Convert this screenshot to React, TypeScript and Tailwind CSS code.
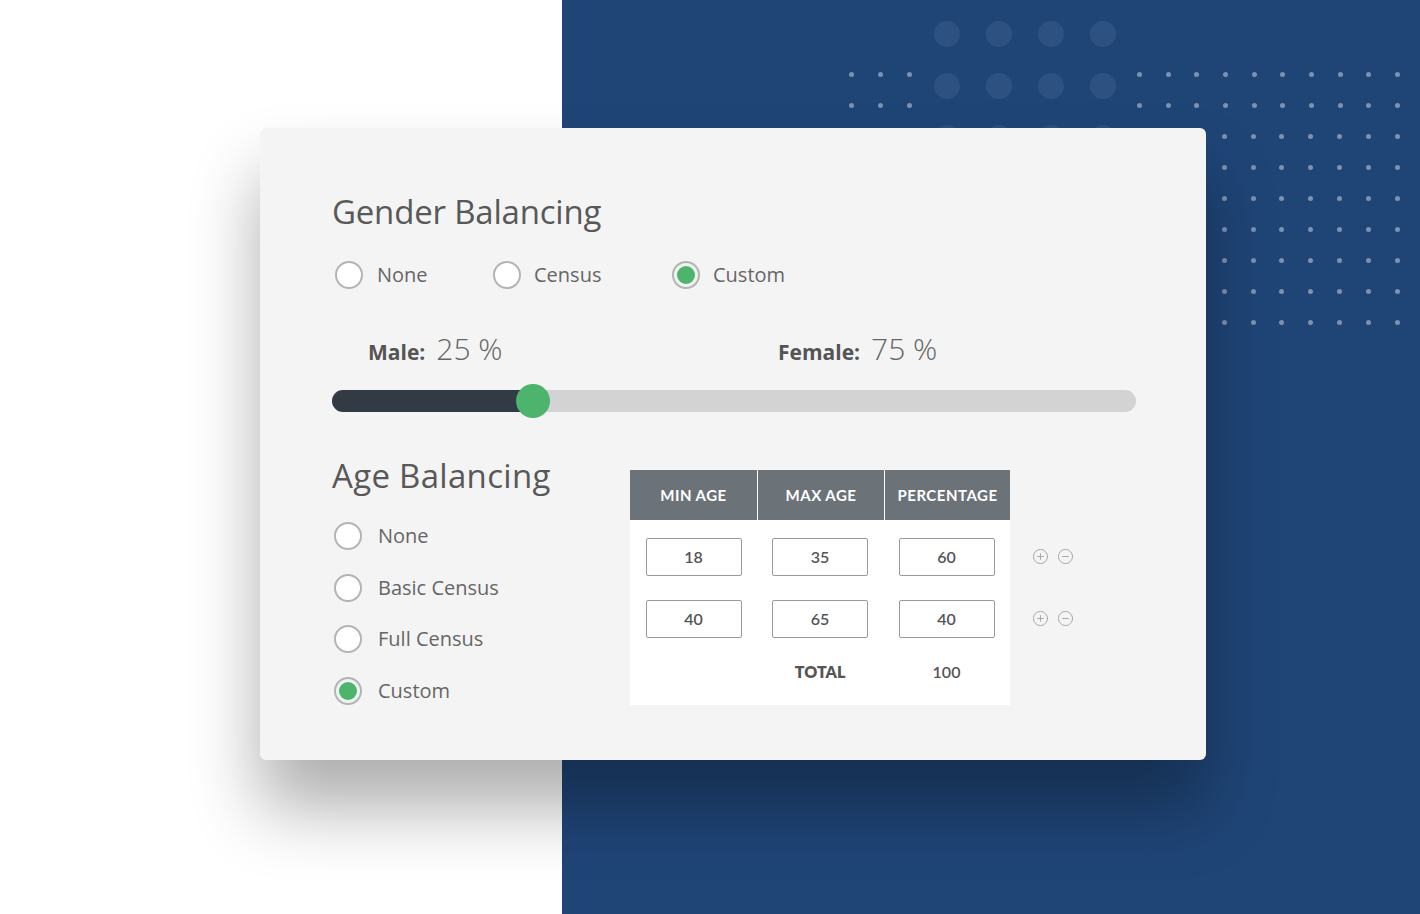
import React from "react";
import { CirclePlus, CircleMinus } from "lucide-react";

const Radio = ({ checked }: { checked?: boolean }) =>
  checked ? (
    <span className="flex h-[28px] w-[28px] shrink-0 items-center justify-center rounded-full border-2 border-[#b4b4b4] bg-[#eef5f0]">
      <span className="h-[18px] w-[18px] rounded-full bg-[#4cb46c]" />
    </span>
  ) : (
    <span className="h-[28px] w-[28px] shrink-0 rounded-full border-2 border-[#b4b4b4] bg-white" />
  );

const Dot = () => <span className="h-[5px] w-[5px] rounded-full bg-[#7d91b0]" />;

const NumBox = ({ v }: { v: string }) => (
  <div className="mx-auto flex h-[38px] w-[96px] items-center justify-center rounded-[2px] border border-[#9a9a9a] bg-white text-[16px] font-semibold text-[#555]">
    {v}
  </div>
);

export default function App() {
  const topRightCols = Array.from({ length: 10 });
  const lowerCols = Array.from({ length: 7 });
  const lowerRows = Array.from({ length: 7 });
  return (
    <div
      className="relative flex h-[914px] w-[1420px] overflow-hidden bg-white"
      style={{ fontFamily: '"Open Sans", "Noto Sans", sans-serif' }}
    >
      <div className="w-[562px] shrink-0 bg-white" />
      <div className="relative flex-1 bg-[#1f4577]">
        {/* big circles */}
        <div className="absolute left-[372px] top-[21px] grid grid-cols-4 gap-x-[26px] gap-y-[26px]">
          {Array.from({ length: 12 }).map((_, i) => (
            <span key={i} className="h-[26px] w-[26px] rounded-full bg-[#2d5282]" />
          ))}
        </div>
        {/* small dots left group */}
        <div className="absolute left-[287px] top-[72px] grid grid-cols-3 gap-x-[24px] gap-y-[26px]">
          {Array.from({ length: 6 }).map((_, i) => (
            <Dot key={i} />
          ))}
        </div>
        {/* small dots right group */}
        <div className="absolute right-[20px] top-[72px] flex flex-col items-end gap-y-[26px]">
          {[0, 1].map((r) => (
            <div key={r} className="flex gap-x-[23.7px]">
              {topRightCols.map((_, i) => (
                <Dot key={i} />
              ))}
            </div>
          ))}
          {lowerRows.map((_, r) => (
            <div key={"l" + r} className="flex gap-x-[23.9px]">
              {lowerCols.map((_, i) => (
                <Dot key={i} />
              ))}
            </div>
          ))}
        </div>
      </div>

      {/* card */}
      <div className="absolute left-[260px] top-[128px] h-[632px] w-[946px] rounded-[6px] bg-[#f4f4f4] pl-[72px] pr-[69px] pt-[64px] shadow-[0_48px_70px_rgba(0,0,0,0.32)]">
        <h2 className="h-[40px] text-[33px] font-normal leading-[40px] tracking-[-0.2px] text-[#585858]">
          Gender Balancing
        </h2>
        <div className="ml-[3px] mt-[28px] flex items-center text-[20px] font-medium text-[#666]">
          <div className="flex w-[158px] items-center gap-[14px]">
            <Radio />
            <span>None</span>
          </div>
          <div className="flex w-[179px] items-center gap-[13px]">
            <Radio />
            <span>Census</span>
          </div>
          <div className="flex items-center gap-[13px]">
            <Radio checked />
            <span>Custom</span>
          </div>
        </div>

        <div className="mt-[38px] flex h-[40px] items-center">
          <div className="ml-[36px] flex w-[410px] items-baseline gap-[11px]">
            <span className="text-[21px] font-bold text-[#555]">Male:</span>
            <span className="text-[30px] font-light text-[#666]">25 %</span>
          </div>
          <div className="flex items-baseline gap-[11px]">
            <span className="text-[21px] font-bold text-[#555]">Female:</span>
            <span className="text-[30px] font-light text-[#666]">75 %</span>
          </div>
        </div>

        <div className="relative mt-[16px] flex h-[34px] w-[804px] items-center">
          <div className="flex h-[22px] w-full overflow-hidden rounded-full bg-[#d3d3d3]">
            <div className="h-full w-[200px] bg-[#323b43]" />
          </div>
          <span className="absolute left-[184px] top-0 h-[34px] w-[34px] rounded-full bg-[#4cb46c]" />
        </div>

        <div className="mt-[38px] flex">
          <div className="w-[298px] shrink-0">
            <h2 className="h-[40px] text-[33px] font-normal leading-[40px] tracking-[0.3px] text-[#585858]">
              Age Balancing
            </h2>
            <div className="ml-[2px] mt-[26px] flex flex-col gap-[23.5px] text-[20px] font-medium text-[#666]">
              {["None", "Basic Census", "Full Census", "Custom"].map((l, i) => (
                <div key={l} className="flex h-[28px] items-center gap-[16px]">
                  <Radio checked={i === 3} />
                  <span>{l}</span>
                </div>
              ))}
            </div>
          </div>

          <div className="mt-[14px] flex items-start">
            <div
              className="w-[380px] bg-white pb-[21px]"
              style={{ fontFamily: 'Lato, "Open Sans", sans-serif' }}
            >
              <div className="grid h-[50px] grid-cols-[127px_126px_125px] gap-x-[1px] bg-white">
                {["MIN AGE", "MAX AGE", "PERCENTAGE"].map((h) => (
                  <div
                    key={h}
                    className="flex items-center justify-center bg-[#6b7378] text-[15px] font-bold tracking-[0.5px] text-white"
                  >
                    {h}
                  </div>
                ))}
              </div>
              <div className="mt-[18px] grid grid-cols-[127px_126px_127px] gap-y-[24px]">
                <NumBox v="18" />
                <NumBox v="35" />
                <NumBox v="60" />
                <NumBox v="40" />
                <NumBox v="65" />
                <NumBox v="40" />
              </div>
              <div className="mt-[22px] grid h-[24px] grid-cols-[127px_126px_127px] items-center text-center text-[16px] text-[#555]">
                <span />
                <span className="font-extrabold">TOTAL</span>
                <span className="font-semibold">100</span>
              </div>
            </div>
            <div className="ml-[22px] mt-[78px] flex flex-col gap-[45px] text-[#a8a8a8]">
              {[0, 1].map((r) => (
                <div key={r} className="flex gap-[8px]">
                  <CirclePlus size={17} strokeWidth={1.4} />
                  <CircleMinus size={17} strokeWidth={1.4} />
                </div>
              ))}
            </div>
          </div>
        </div>
      </div>
    </div>
  );
}
